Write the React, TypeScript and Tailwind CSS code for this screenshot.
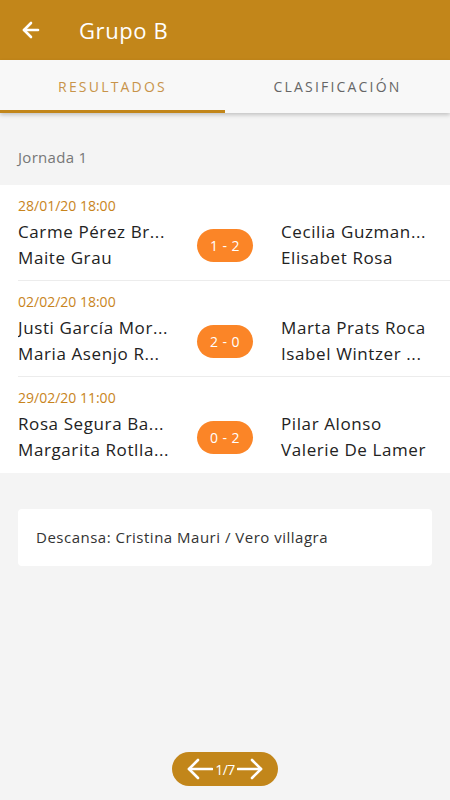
import { ArrowLeft } from 'lucide-react'

const font = { fontFamily: '"Open Sans", "DejaVu Sans", sans-serif' }

const matches = [
  {
    date: '28/01/20 18:00',
    home: ['Carme Pérez Br...', 'Maite Grau'],
    score: '1 - 2',
    away: ['Cecilia Guzman...', 'Elisabet Rosa'],
  },
  {
    date: '02/02/20 18:00',
    home: ['Justi García Mor...', 'Maria Asenjo R...'],
    score: '2 - 0',
    away: ['Marta Prats Roca', 'Isabel Wintzer ...'],
  },
  {
    date: '29/02/20 11:00',
    home: ['Rosa Segura Ba...', 'Margarita Rotlla...'],
    score: '0 - 2',
    away: ['Pilar Alonso', 'Valerie De Lamer'],
  },
]

function Arrow({ dir }: { dir: 'left' | 'right' }) {
  return (
    <svg width="26" height="22" viewBox="0 0 26 22" fill="none" stroke="white" strokeWidth="2.6" strokeLinecap="round" strokeLinejoin="round">
      {dir === 'left' ? (
        <>
          <path d="M25 11H2" />
          <path d="M11 2L2 11l9 9" />
        </>
      ) : (
        <>
          <path d="M1 11h23" />
          <path d="M15 2l9 9-9 9" />
        </>
      )}
    </svg>
  )
}

export default function App() {
  return (
    <div className="w-[450px] h-[800px] bg-[#f4f4f4] flex flex-col overflow-hidden" style={font}>
      <header className="h-[60px] bg-[#c2861a] flex items-center shrink-0">
        <div className="w-[79px] flex items-center pl-[19px]">
          <ArrowLeft size={24} strokeWidth={2.6} color="white" />
        </div>
        <h1 className="text-white text-[22px] tracking-[0.6px]">Grupo B</h1>
      </header>

      <nav className="h-[53px] bg-[#f8f8f8] flex shadow-[0_2px_4px_rgba(0,0,0,0.2)] shrink-0 relative z-10">
        <div className="flex-1 flex items-center justify-center border-b-[3px] border-[#c2861a] pt-[3px]">
          <span className="text-[14px] tracking-[2.2px] text-[#c8944a]">RESULTADOS</span>
        </div>
        <div className="flex-1 flex items-center justify-center">
          <span className="text-[14px] tracking-[2.2px] text-[#666]">CLASIFICACIÓN</span>
        </div>
      </nav>

      <div className="pt-[33px] pb-[17px] px-[18px] text-[15px] tracking-[0.3px] text-[#777] leading-[22px]">Jornada 1</div>

      <section className="bg-white">
        {matches.map((m, i) => (
          <div key={i} className="pl-[18px]">
            <div className={`h-[96px] pt-[11px] pr-[18px] ${i < matches.length - 1 ? 'border-b border-[#ececec]' : ''}`}>
              <div className="text-[14px] leading-[20px] text-[#c8841c]">{m.date}</div>
              <div className="grid grid-cols-[157px_100px_1fr] items-center mt-[3px]">
                <div className="text-[17px] tracking-[0.6px] leading-[26px] text-[#222] whitespace-nowrap overflow-hidden">
                  <div>{m.home[0]}</div>
                  <div>{m.home[1]}</div>
                </div>
                <div className="flex justify-center">
                  <span className="h-[33px] min-w-[50px] px-[13px] rounded-full bg-[#fb8527] text-white text-[14px] tracking-[0.4px] flex items-center justify-center">
                    {m.score}
                  </span>
                </div>
                <div className="pl-[6px] text-[17px] tracking-[0.6px] leading-[26px] text-[#222] whitespace-nowrap overflow-hidden">
                  <div>{m.away[0]}</div>
                  <div>{m.away[1]}</div>
                </div>
              </div>
            </div>
          </div>
        ))}
      </section>

      <div className="mt-[36px] mx-[18px] h-[57px] bg-white rounded-[4px] flex items-center px-[18px]">
        <span className="text-[15px] tracking-[0.5px] text-[#333]">Descansa: Cristina Mauri / Vero villagra</span>
      </div>

      <div className="flex-1" />

      <div className="flex justify-center pb-[14px]">
        <div className="h-[34px] w-[106px] rounded-full bg-[#c2861a] flex items-center justify-center gap-[2px]">
          <Arrow dir="left" />
          <span className="text-white text-[14px] tracking-[-0.5px]">1/7</span>
          <Arrow dir="right" />
        </div>
      </div>
    </div>
  )
}
